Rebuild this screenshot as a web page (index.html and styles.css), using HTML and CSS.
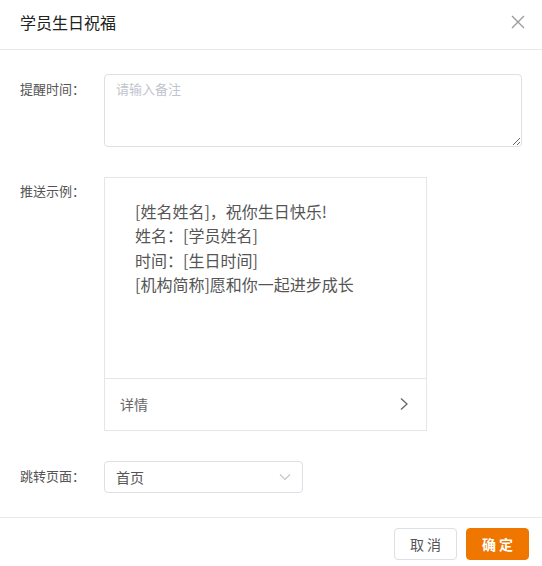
FILE: index.html
```html
<!DOCTYPE html>
<html lang="zh-CN">
<head>
<meta charset="utf-8">
<title>学员生日祝福</title>
<link rel="stylesheet" href="styles.css">
</head>
<body>
<div class="dialog">
  <div class="header">
    <span class="title">学员生日祝福</span>
    <span class="close">
      <svg width="14" height="14" viewBox="0 0 14 14"><path d="M1 1L13 13M13 1L1 13" stroke="#9a9a9a" stroke-width="1.3" fill="none"/></svg>
    </span>
  </div>
  <div class="body">
    <div class="row">
      <div class="label">提醒时间：</div>
      <textarea class="textarea" placeholder="请输入备注"></textarea>
    </div>
    <div class="row row-preview">
      <div class="label">推送示例：</div>
      <div class="preview">
        <div class="preview-text">
          <div>[姓名姓名]，祝你生日快乐!</div>
          <div>姓名：[学员姓名]</div>
          <div>时间：[生日时间]</div>
          <div>[机构简称]愿和你一起进步成长</div>
        </div>
        <div class="preview-detail">
          <span>详情</span>
          <svg width="10" height="14" viewBox="0 0 10 14"><path d="M2 1.5L8 7L2 12.5" stroke="#666" stroke-width="1.3" fill="none"/></svg>
        </div>
      </div>
    </div>
    <div class="row row-select">
      <div class="label">跳转页面：</div>
      <div class="select">
        <span>首页</span>
        <svg width="12" height="8" viewBox="0 0 12 8"><path d="M1 1.5L6 6.5L11 1.5" stroke="#c0c4cc" stroke-width="1.1" fill="none"/></svg>
      </div>
    </div>
  </div>
  <div class="footer">
    <button class="btn btn-cancel">取 消</button>
    <button class="btn btn-ok">确 定</button>
  </div>
</div>
</body>
</html>
```
FILE: styles.css
```css
* { box-sizing: border-box; }
html, body { margin: 0; padding: 0; background: #fff; }
body {
  font-family: "Noto Sans CJK SC", "Noto Sans", sans-serif;
  color: #333;
}
.dialog { width: 542px; height: 566px; display: flex; flex-direction: column; }
.header {
  height: 50px;
  border-bottom: 1px solid #e8e8e8;
  display: flex;
  align-items: center;
  justify-content: space-between;
  padding: 0 17px 6px 20px;
}
.title { font-size: 16px; color: #222; line-height: 20px; }
.close { display: flex; width: 14px; height: 14px; }
.body { padding: 24px 20px 0 20px; flex: 1; }
.row { display: flex; align-items: flex-start; }
.label {
  width: 84px;
  flex: none;
  font-size: 13px;
  line-height: 30px;
  color: #555;
}
.textarea {
  width: 418px;
  height: 73px;
  border: 1px solid #dcdfe6;
  border-radius: 4px;
  padding: 4px 11px;
  font-family: inherit;
  font-size: 13px;
  line-height: 20px;
  color: #555;
  resize: vertical;
  outline: none;
  margin: 0;
  display: block;
}
.textarea::placeholder { color: #c0c4cc; }
.row-preview { margin-top: 30px; }
.row-preview .label { line-height: 28px; }
.preview {
  width: 323px;
  height: 254px;
  border: 1px solid #e6e6e6;
  display: flex;
  flex-direction: column;
}
.preview-text {
  flex: 1;
  padding: 21px 0 0 30px;
  font-size: 16px;
  line-height: 24.3px;
  color: #555;
}
.preview-detail {
  height: 52px;
  border-top: 1px solid #e6e6e6;
  display: flex;
  align-items: center;
  justify-content: space-between;
  padding: 0 17px 2px 15px;
  font-size: 14px;
  color: #666;
}
.row-select { margin-top: 30px; }
.select {
  width: 199px;
  height: 32px;
  border: 1px solid #dcdfe6;
  border-radius: 4px;
  display: flex;
  align-items: center;
  justify-content: space-between;
  padding: 0 11px 1px 11px;
  font-size: 14px;
  color: #555;
}
.footer {
  height: 49px;
  border-top: 1px solid #e8e8e8;
  display: flex;
  justify-content: flex-end;
  align-items: flex-start;
  gap: 9px;
  padding: 10px 13px 0 0;
}
.btn {
  height: 32px;
  width: 63px;
  border-radius: 4px;
  font-family: inherit;
  font-size: 14px;
  padding: 0;
  margin: 0;
  cursor: pointer;
}
.btn-cancel { background: #fff; border: 1px solid #dcdfe6; color: #555; width: 63px; }
.btn-ok { background: #ef7700; border: 1px solid #ef7700; color: #fff; font-weight: 600; }
```
